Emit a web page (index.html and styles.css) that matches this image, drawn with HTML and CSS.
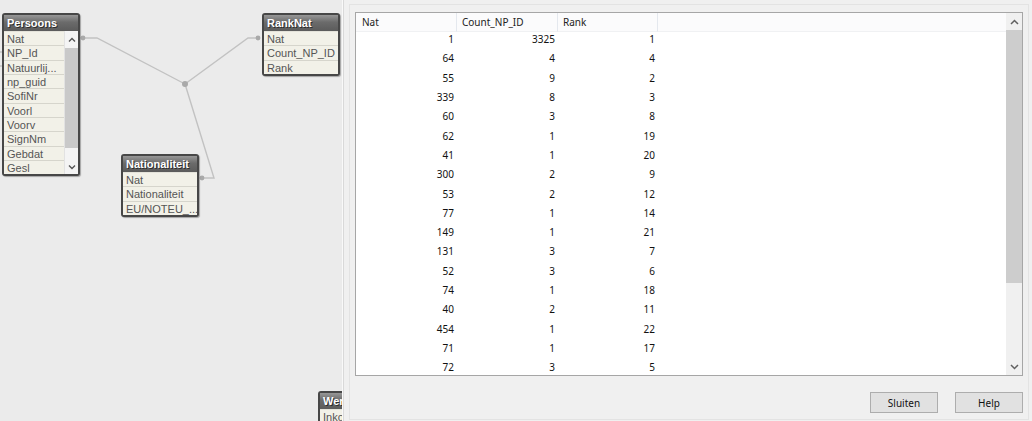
FILE: index.html
```html
<!DOCTYPE html>
<html lang="nl">
  <head>
    <meta charset="UTF-8" />
    <title>Tabelviewer</title>
    <link rel="stylesheet" href="styles.css">
  </head>
  <body>
    <div class="app">
      <!-- Datamodel -->
      <div class="canvas">
        <svg class="links" width="343" height="421" viewBox="0 0 343 421">
          <g fill="none" stroke="#c2c2c2" stroke-width="1.4">
            <polyline points="83,38 97,38 185,84" />
            <polyline points="185,84 248,38 258,38" />
            <polyline points="185,84 214,178 202,178" />
            <line x1="0" y1="52" x2="3" y2="52" />
            <line x1="0" y1="66" x2="3" y2="66" />
          </g>
          <g fill="#a9a9a9">
            <circle cx="83" cy="38" r="2.4" />
            <circle cx="258" cy="38" r="2.4" />
            <circle cx="202" cy="178" r="2.4" />
            <circle cx="185" cy="84" r="3" />
          </g>
        </svg>

        <div class="node node-persoons">
          <div class="node-title">Persoons</div>
          <div class="node-body">
            <ul class="fields">
              <li>Nat</li>
              <li>NP_Id</li>
              <li>Natuurlij...</li>
              <li>np_guid</li>
              <li>SofiNr</li>
              <li>Voorl</li>
              <li>Voorv</li>
              <li>SignNm</li>
              <li>Gebdat</li>
              <li>Gesl</li>
            </ul>
            <div class="mini-scroll">
              <span class="mini-btn">
                <svg width="8" height="5" viewBox="0 0 8 5"><polyline points="1,4.5 4,1.5 7,4.5" fill="none" stroke="#555" stroke-width="1.4" /></svg>
              </span>
              <span class="mini-thumb"></span>
              <span class="mini-track"></span>
              <span class="mini-btn">
                <svg width="8" height="5" viewBox="0 0 8 5"><polyline points="1,0.5 4,3.5 7,0.5" fill="none" stroke="#555" stroke-width="1.4" /></svg>
              </span>
            </div>
          </div>
        </div>

        <div class="node node-ranknat">
          <div class="node-title">RankNat</div>
          <ul class="fields">
            <li>Nat</li>
            <li>Count_NP_ID</li>
            <li>Rank</li>
          </ul>
        </div>

        <div class="node node-nat">
          <div class="node-title">Nationaliteit</div>
          <ul class="fields">
            <li>Nat</li>
            <li>Nationaliteit</li>
            <li>EU/NOTEU_...</li>
          </ul>
        </div>

        <div class="node node-wer">
          <div class="node-title">Werkgever</div>
          <ul class="fields">
            <li>Inkomen</li>
          </ul>
        </div>
      </div>

      <!-- Voorbeeld van tabel -->
      <div class="pane">
        <div class="frame">
          <div class="grid">
            <div class="grid-view">
              <table>
                <colgroup>
                  <col class="c-nat">
                  <col class="c-count">
                  <col class="c-rank">
                  <col>
                </colgroup>
                <thead>
                  <tr><th>Nat</th><th>Count_NP_ID</th><th>Rank</th><th></th></tr>
                </thead>
                <tbody>
                  <tr><td>1</td><td>3325</td><td>1</td><td></td></tr>
                  <tr><td>64</td><td>4</td><td>4</td><td></td></tr>
                  <tr><td>55</td><td>9</td><td>2</td><td></td></tr>
                  <tr><td>339</td><td>8</td><td>3</td><td></td></tr>
                  <tr><td>60</td><td>3</td><td>8</td><td></td></tr>
                  <tr><td>62</td><td>1</td><td>19</td><td></td></tr>
                  <tr><td>41</td><td>1</td><td>20</td><td></td></tr>
                  <tr><td>300</td><td>2</td><td>9</td><td></td></tr>
                  <tr><td>53</td><td>2</td><td>12</td><td></td></tr>
                  <tr><td>77</td><td>1</td><td>14</td><td></td></tr>
                  <tr><td>149</td><td>1</td><td>21</td><td></td></tr>
                  <tr><td>131</td><td>3</td><td>7</td><td></td></tr>
                  <tr><td>52</td><td>3</td><td>6</td><td></td></tr>
                  <tr><td>74</td><td>1</td><td>18</td><td></td></tr>
                  <tr><td>40</td><td>2</td><td>11</td><td></td></tr>
                  <tr><td>454</td><td>1</td><td>22</td><td></td></tr>
                  <tr><td>71</td><td>1</td><td>17</td><td></td></tr>
                  <tr><td>72</td><td>3</td><td>5</td><td></td></tr>
                </tbody>
              </table>
            </div>
            <div class="vscroll">
              <span class="sb-btn">
                <svg width="9" height="6" viewBox="0 0 9 6"><polyline points="1,5 4.5,1.5 8,5" fill="none" stroke="#606060" stroke-width="1.5" /></svg>
              </span>
              <span class="sb-thumb"></span>
              <span class="sb-track"></span>
              <span class="sb-btn">
                <svg width="9" height="6" viewBox="0 0 9 6"><polyline points="1,1 4.5,4.5 8,1" fill="none" stroke="#606060" stroke-width="1.5" /></svg>
              </span>
            </div>
          </div>
          <div class="actions">
            <button>Sluiten</button>
            <button>Help</button>
          </div>
        </div>
      </div>
    </div>
  </body>
</html>
```

FILE: styles.css
```css
* {
  box-sizing: border-box;
}
body {
  margin: 0;
  background-color: #f0f0f0;
  font-family: "Noto Sans", sans-serif;
}
.app {
  display: flex;
  width: 1032px;
  height: 421px;
  overflow: hidden;
}

/* datamodel canvas */
.canvas {
  position: relative;
  width: 343px;
  flex: none;
  background-color: #ebebeb;
  border-right: 1px solid #f9f9f9;
  overflow: hidden;
  font-family: "Liberation Sans", Arial, sans-serif;
}
.links {
  position: absolute;
  left: 0;
  top: 0;
}
.node {
  position: absolute;
  width: 78px;
  border: 2px solid #474747;
  border-radius: 3px;
  background-color: #474747;
  box-shadow: 1px 1px 1px rgba(0, 0, 0, 0.3);
}
.node-persoons {
  left: 2px;
  top: 13px;
}
.node-ranknat {
  left: 262px;
  top: 13px;
}
.node-nat {
  left: 121px;
  top: 154px;
}
.node-wer {
  left: 318px;
  top: 391px;
}
.node-title {
  height: 16px;
  line-height: 16px;
  padding-left: 3px;
  color: white;
  font-size: 11px;
  font-weight: bold;
  text-shadow: 1px 1px 0 #2e2e2e;
  background: linear-gradient(#979797, #6b6b6b 45%, #5b5b5b);
  white-space: nowrap;
  overflow: hidden;
}
.node-body {
  display: flex;
}
.fields {
  list-style: none;
  margin: 0;
  padding: 0;
  flex: 1;
  background-color: #f2f1e8;
}
.fields li {
  height: 14.33px;
  line-height: 14px;
  padding-left: 3px;
  font-size: 11px;
  color: #555;
  border-top: 1px solid #d6d5cc;
  white-space: nowrap;
  overflow: hidden;
}
.fields li:first-child {
  border-top-color: #e4e3da;
}
.mini-scroll {
  width: 14px;
  display: flex;
  flex-direction: column;
  background-color: #f4f4f4;
  border-left: 1px solid #e2e2e2;
}
.mini-btn {
  display: flex;
  justify-content: center;
  align-items: center;
  height: 17px;
}
.mini-btn:last-child {
  height: 14.3px;
}
.mini-thumb {
  height: 100px;
  background-color: #c9c9c9;
}
.mini-track {
  height: 12px;
}

/* rechter paneel */
.pane {
  flex: 1;
  display: flex;
  border-left: 1px solid #d9d9d9;
  padding: 4px 3px 1px 5px;
}
.frame {
  flex: 1;
  display: flex;
  flex-direction: column;
  border: 1px solid #e3e3e3;
  padding: 7px 5px 6px 5px;
}
.grid {
  display: flex;
  height: 364px;
  border: 1px solid #a6a6a6;
  background-color: white;
}
.grid-view {
  flex: 1;
  overflow: hidden;
}
table {
  width: 100%;
  table-layout: fixed;
  border-collapse: separate;
  border-spacing: 0;
  font-size: 10px;
}
col.c-nat {
  width: 101px;
}
col.c-count {
  width: 101px;
}
col.c-rank {
  width: 100px;
}
th {
  height: 19px;
  padding: 0 0 0 5px;
  text-align: left;
  font-weight: normal;
  color: #222;
  background-color: #fbfbfc;
  border-right: 1px solid #e4e8ee;
  border-bottom: 1px solid #f0f1f3;
  white-space: nowrap;
}
th:first-child {
  padding-left: 6px;
}
th:last-child {
  border-right: none;
}
td {
  height: 19.3px;
  padding: 0 3px 5px 0;
  line-height: 14px;
  text-align: right;
  color: #111;
}
.vscroll {
  width: 16px;
  flex: none;
  display: flex;
  flex-direction: column;
  background-color: #f0f0f0;
}
.sb-btn {
  display: flex;
  justify-content: center;
  align-items: center;
  height: 17px;
}
.sb-thumb {
  height: 253px;
  background-color: #cdcdcd;
}
.sb-track {
  flex: 1;
}
.actions {
  display: flex;
  justify-content: flex-end;
  gap: 17px;
  margin-top: 16px;
}
button {
  width: 68px;
  height: 21px;
  padding: 0;
  font-family: "Noto Sans", sans-serif;
  font-size: 10px;
  color: #111;
  background-color: #e1e1e1;
  border: 1px solid #adadad;
}
```
